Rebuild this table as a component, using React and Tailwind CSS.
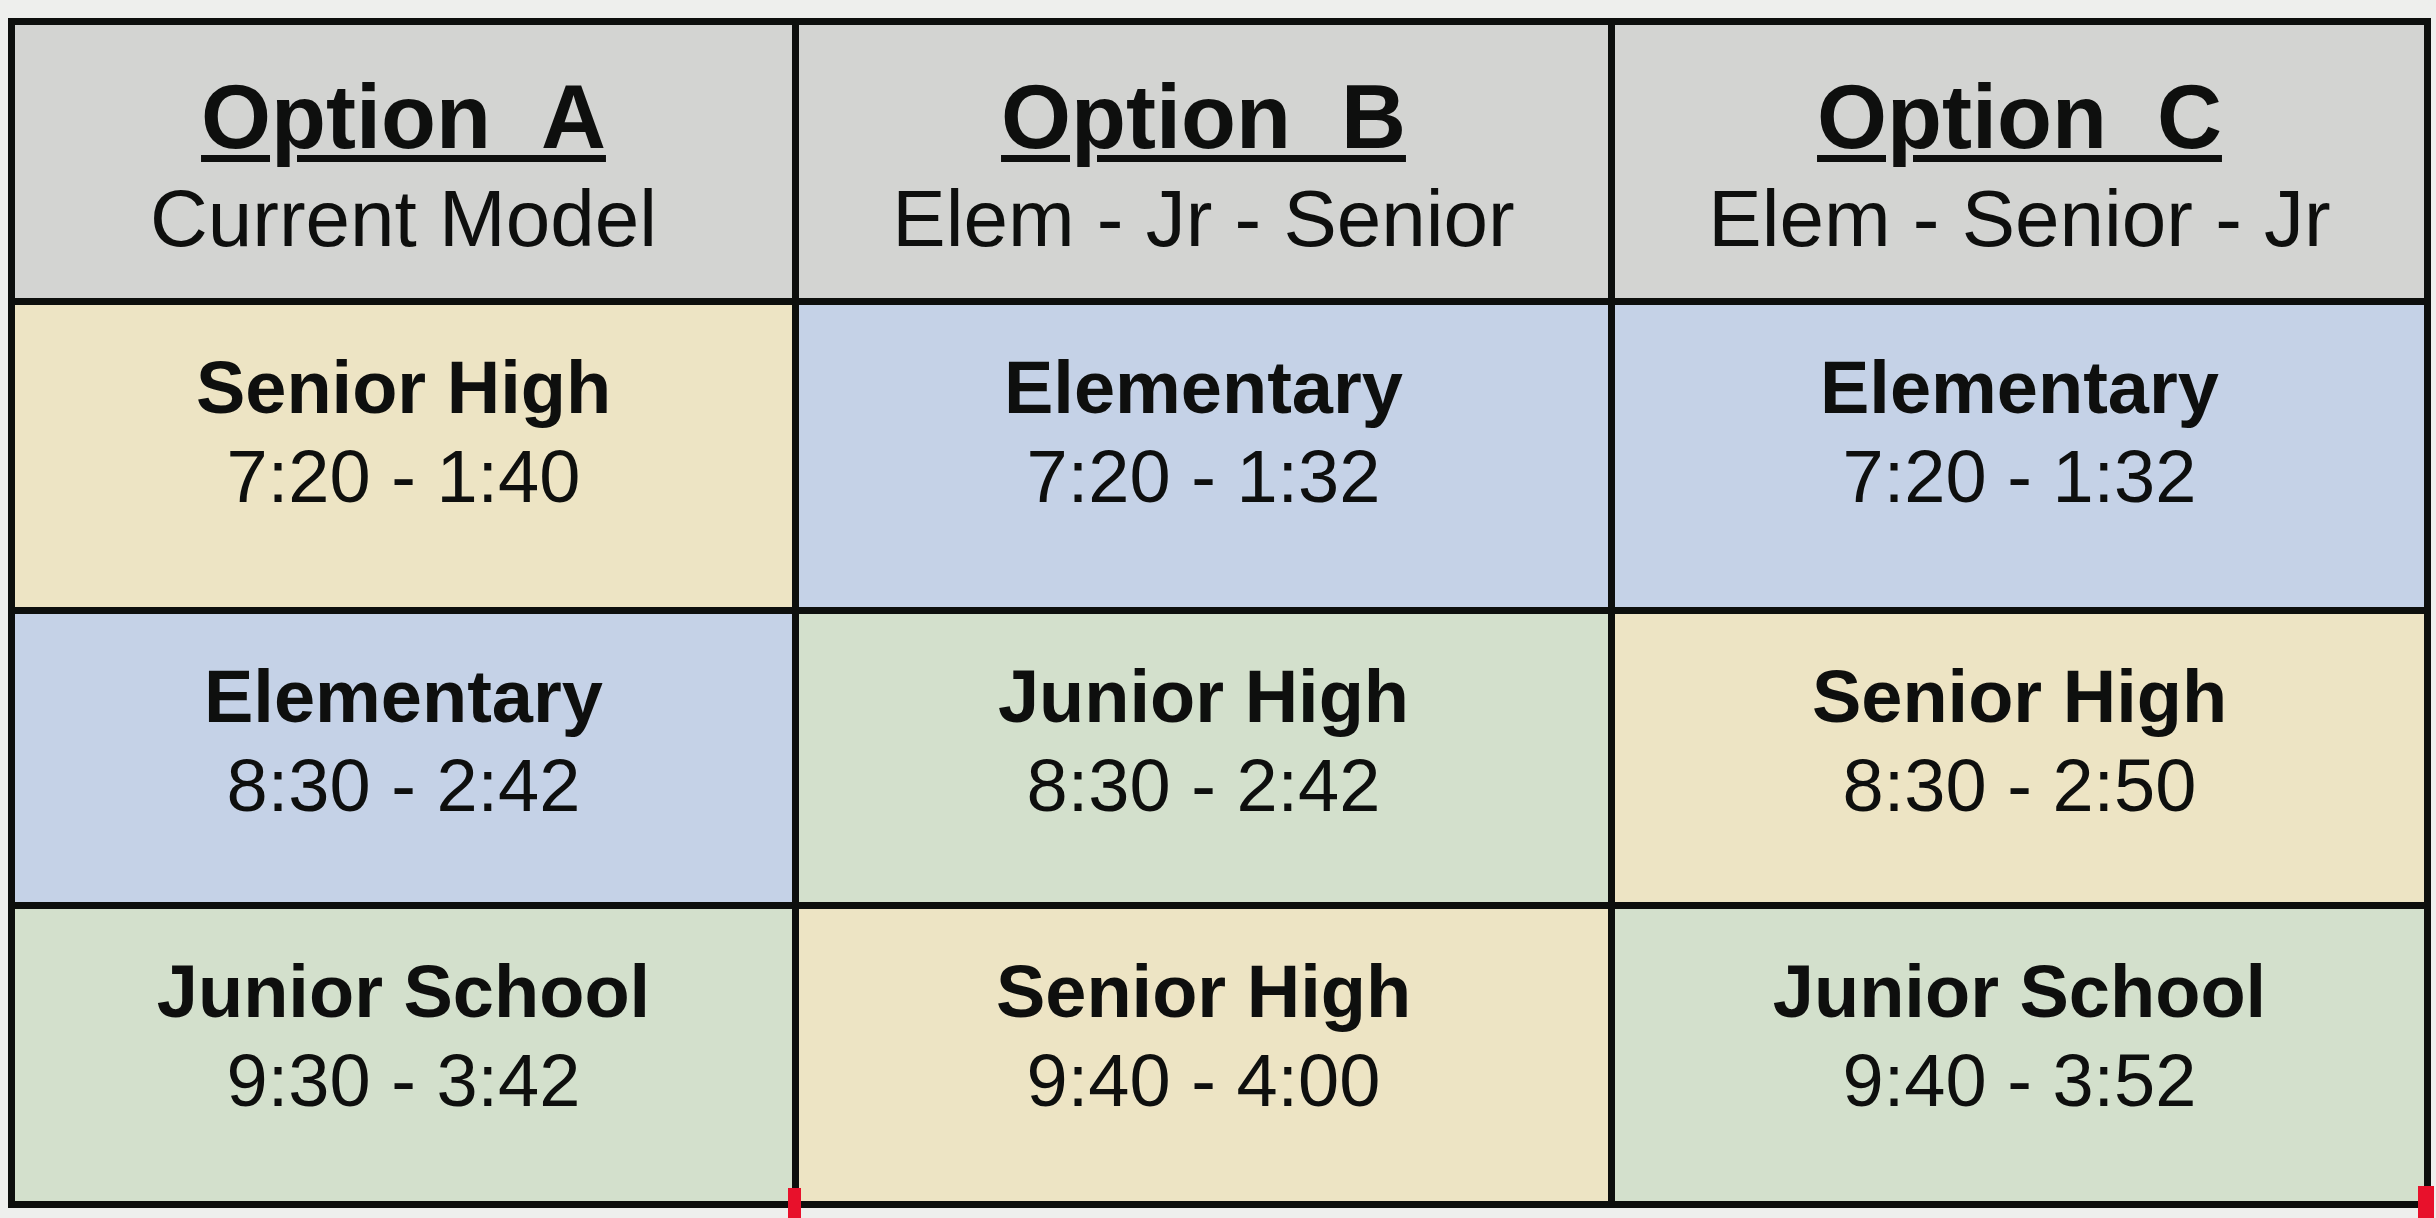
import React from "react";

const headers = [
  { title: "Option\u00a0\u00a0A", sub: "Current Model" },
  { title: "Option\u00a0\u00a0B", sub: "Elem - Jr - Senior" },
  { title: "Option\u00a0\u00a0C", sub: "Elem - Senior - Jr" },
];

const Y = "bg-[#ede4c4]";
const B = "bg-[#c5d2e7]";
const G = "bg-[#d3e0cc]";

const rows = [
  [
    { name: "Senior High", time: "7:20 - 1:40", bg: Y },
    { name: "Elementary", time: "7:20 - 1:32", bg: B },
    { name: "Elementary", time: "7:20 - 1:32", bg: B },
  ],
  [
    { name: "Elementary", time: "8:30 - 2:42", bg: B },
    { name: "Junior High", time: "8:30 - 2:42", bg: G },
    { name: "Senior High", time: "8:30 - 2:50", bg: Y },
  ],
  [
    { name: "Junior School", time: "9:30 - 3:42", bg: G },
    { name: "Senior High", time: "9:40 - 4:00", bg: Y },
    { name: "Junior School", time: "9:40 - 3:52", bg: G },
  ],
];

export default function App() {
  return (
    <div
      className="relative w-[2436px] h-[1218px] overflow-hidden bg-[#eeefed] text-[#0e0f0e]"
      style={{ fontFamily: '"Liberation Sans", Arial, sans-serif' }}
    >
      <div className="ml-[8px] pt-[18px]">
        <div className="grid w-max grid-cols-[777px_809px_809px] grid-rows-[273px_302px_288px_292px] gap-[7px] bg-[#0d0f0d] p-[7px]">
          {headers.map((h, i) => (
            <div key={i} className="flex flex-col items-center bg-[#d3d4d2] pt-[35px]">
              <div className="text-[90px] leading-[114px] font-bold underline decoration-[7px] underline-offset-[7px] whitespace-pre">
                {h.title}
              </div>
              <div className="text-[80px] leading-[90px] whitespace-pre">{h.sub}</div>
            </div>
          ))}
          {rows.flat().map((c, i) => (
            <div key={i} className={`flex flex-col items-center pt-[38px] ${c.bg}`}>
              <div className="text-[74px] leading-[89px] font-bold whitespace-pre">{c.name}</div>
              <div className="text-[74px] leading-[89px] whitespace-pre">{c.time}</div>
            </div>
          ))}
        </div>
      </div>
      <div className="absolute left-[788px] top-[1188px] w-[13px] h-[30px] bg-[#e8112b]" />
      <div className="absolute left-[2418px] top-[1186px] w-[16px] h-[32px] bg-[#e8112b]" />
    </div>
  );
}
